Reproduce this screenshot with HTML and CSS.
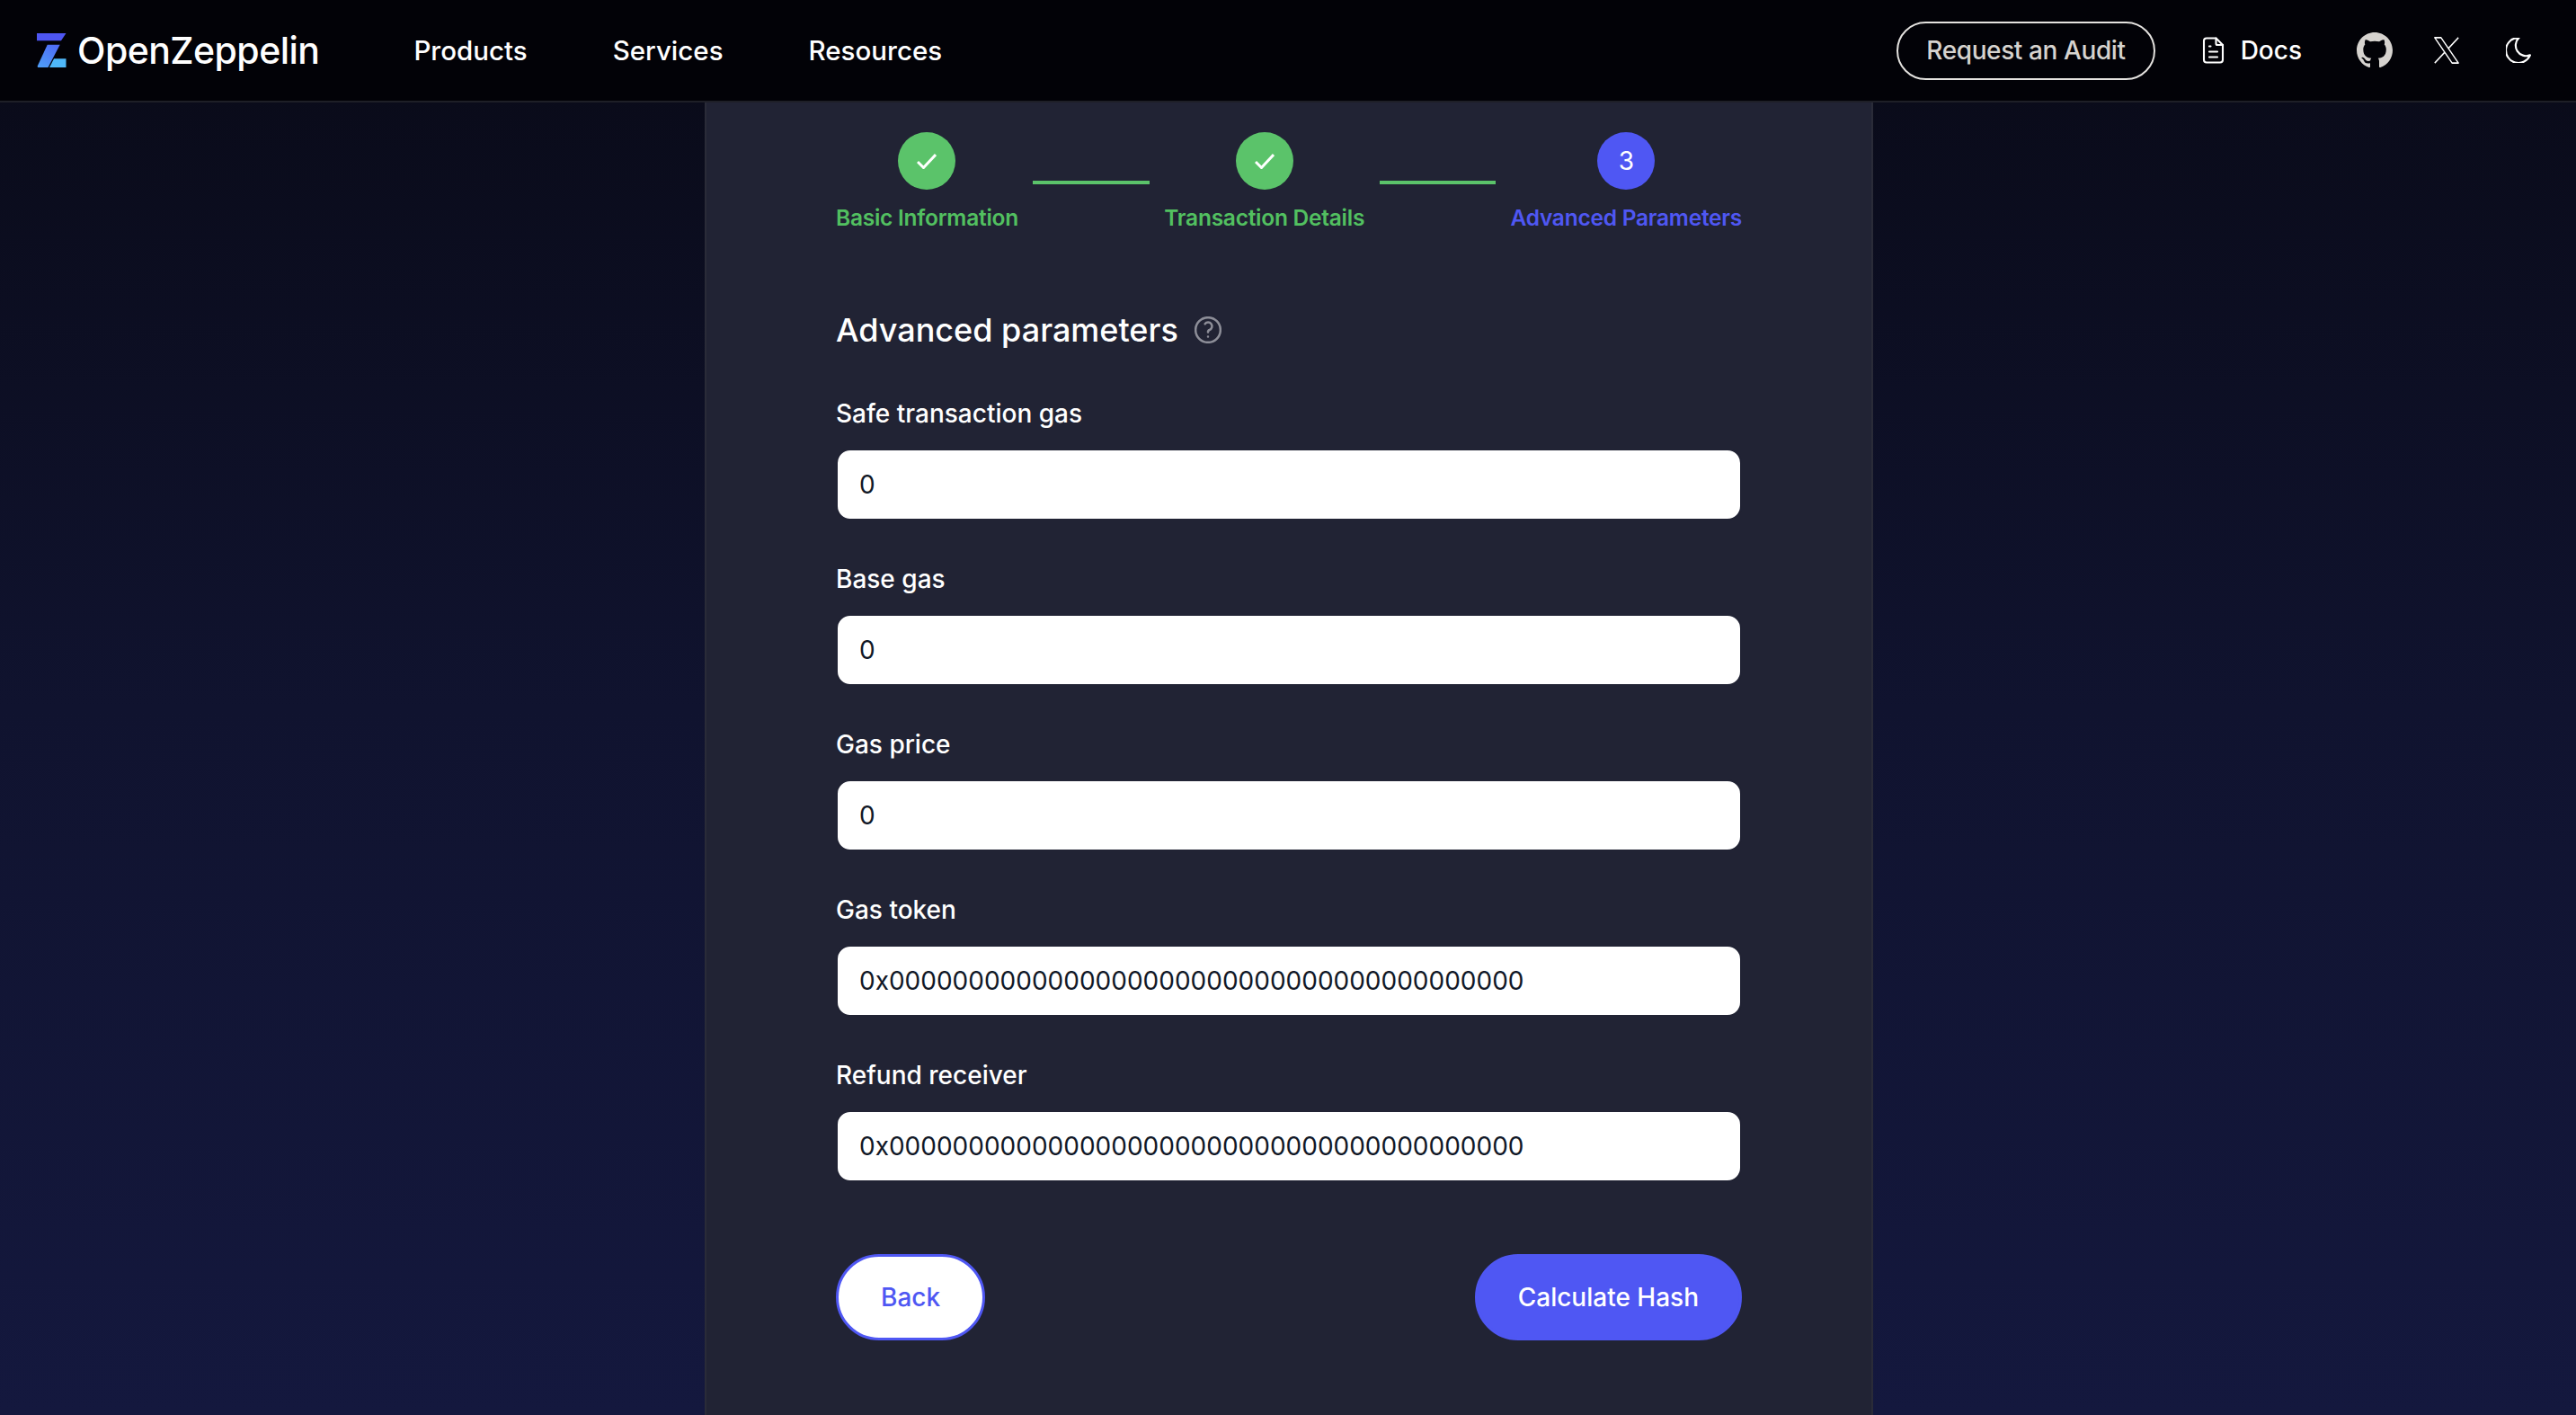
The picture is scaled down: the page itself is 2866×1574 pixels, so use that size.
FILE: index.html
```html
<!DOCTYPE html>
<html>
<head>
	<title>Safe Utils - Advanced parameters</title>
	<meta charset="UTF-8">
	<link rel="stylesheet" href="styles.css">
</head>
<body>
	<header class="topbar">
		<a class="brand" href="#">
			<svg class="brand-mark" viewBox="0 0 33 38" width="33" height="38">
				<defs>
					<linearGradient id="zmid" x1="0.8" y1="0" x2="0.2" y2="1">
						<stop offset="0" stop-color="#4f6cf6"/>
						<stop offset="1" stop-color="#4e9cf8"/>
					</linearGradient>
				</defs>
				<polygon points="0,0 32.5,0 27,8.3 0,8.3" fill="#4e56f2"/>
				<polygon points="11.7,12.7 25.7,12.7 12.5,38 1.2,38 0.6,36.8" fill="url(#zmid)"/>
				<polygon points="19,28.2 32.5,28.2 32.5,38 14,38" fill="#4fb8fa"/>
			</svg>
			<span class="brand-name">OpenZeppelin</span>
		</a>
		<nav class="mainnav">
			<a href="#">Products</a>
			<a href="#">Services</a>
			<a href="#">Resources</a>
		</nav>
		<div class="actions">
			<a class="audit" href="#">Request an Audit</a>
			<a class="docs" href="#">
				<svg viewBox="4 2 16 20" width="25" height="30" fill="none" stroke="#fff" stroke-width="1.4" stroke-linecap="round" stroke-linejoin="round">
					<path d="M14 3v4a1 1 0 0 0 1 1h4"/>
					<path d="M17 21h-10a2 2 0 0 1 -2 -2v-14a2 2 0 0 1 2 -2h7l5 5v11a2 2 0 0 1 -2 2z"/>
					<path d="M9 9h1M9 13h6M9 17h6"/>
				</svg>
				<span>Docs</span>
			</a>
			<a class="icon-github" href="#">
				<svg viewBox="0 0 16 16" width="40" height="40" fill="#d6d3cf">
					<path d="M8 0C3.58 0 0 3.58 0 8c0 3.54 2.29 6.53 5.47 7.59.4.07.55-.17.55-.38 0-.19-.01-.82-.01-1.49-2.01.37-2.53-.49-2.69-.94-.09-.23-.48-.94-.82-1.13-.28-.15-.68-.52-.01-.53.63-.01 1.08.58 1.23.82.72 1.21 1.87.87 2.33.66.07-.52.28-.87.51-1.07-1.78-.2-3.64-.89-3.64-3.95 0-.87.31-1.59.82-2.15-.08-.2-.36-1.02.08-2.12 0 0 .67-.21 2.2.82.64-.18 1.32-.27 2-.27.68 0 1.36.09 2 .27 1.53-1.04 2.2-.82 2.2-.82.44 1.1.16 1.92.08 2.12.51.56.82 1.27.82 2.15 0 3.07-1.87 3.75-3.65 3.95.29.25.54.73.54 1.48 0 1.07-.01 1.93-.01 2.2 0 .21.15.46.55.38A8.013 8.013 0 0016 8c0-4.42-3.58-8-8-8z"/>
				</svg>
			</a>
			<a class="icon-x" href="#">
				<svg viewBox="3.5 3.5 17 17" width="28" height="30" fill="none" stroke="#fff" stroke-width="0.9" stroke-linejoin="round" preserveAspectRatio="none">
					<path d="M4 4l11.733 16h4.267l-11.733 -16z"/>
					<path d="M4 20l6.768 -6.768m2.46 -2.46l6.772 -6.772"/>
				</svg>
			</a>
			<a class="icon-moon" href="#">
				<svg viewBox="3 3 18 18" width="28" height="28" fill="none" stroke="#fff" stroke-width="1.4" stroke-linejoin="round">
					<path d="M12 3c.132 0 .263 0 .393 0a7.5 7.5 0 0 0 7.92 12.446a9 9 0 1 1 -8.313 -12.454z"/>
				</svg>
			</a>
		</div>
	</header>

	<main class="page">
		<section class="panel">
			<div class="stepper">
				<div class="step done">
					<span class="dot">
						<svg viewBox="0 0 22 17" width="22" height="17" fill="none" stroke="#fff" stroke-width="3"><path d="M1 9l6.500 6.500L21 1"/></svg>
					</span>
					<span class="step-label">Basic Information</span>
				</div>
				<div class="step-line"></div>
				<div class="step done">
					<span class="dot">
						<svg viewBox="0 0 22 17" width="22" height="17" fill="none" stroke="#fff" stroke-width="3"><path d="M1 9l6.500 6.500L21 1"/></svg>
					</span>
					<span class="step-label">Transaction Details</span>
				</div>
				<div class="step-line"></div>
				<div class="step current">
					<span class="dot">3</span>
					<span class="step-label">Advanced Parameters</span>
				</div>
			</div>

			<h2 class="section-title">
				Advanced parameters
				<svg viewBox="3 3 18 18" width="30" height="30" fill="none" stroke="#8d8e98" stroke-width="1.500" stroke-linecap="round" stroke-linejoin="round">
					<circle cx="12" cy="12" r="8.300"/>
					<path d="M12 16.500v.01M12 13.500a1.500 1.500 0 0 1 1 -1.500a2.600 2.600 0 1 0 -3 -4"/>
				</svg>
			</h2>

			<form action="javascript:void(0);">
				<label class="field">
					<span>Safe transaction gas</span>
					<input type="text" value="0">
				</label>
				<label class="field">
					<span>Base gas</span>
					<input type="text" value="0">
				</label>
				<label class="field">
					<span>Gas price</span>
					<input type="text" value="0">
				</label>
				<label class="field">
					<span>Gas token</span>
					<input type="text" value="0x0000000000000000000000000000000000000000">
				</label>
				<label class="field">
					<span>Refund receiver</span>
					<input type="text" value="0x0000000000000000000000000000000000000000">
				</label>
				<div class="buttons">
					<button type="button" class="btn btn-back">Back</button>
					<button type="button" class="btn btn-next">Calculate Hash</button>
				</div>
			</form>
		</section>
	</main>
</body>
</html>
```

FILE: styles.css
```css
*{
	box-sizing:border-box;
}
html,body{
	height:100%;
}
body{
	margin:0;
	display:flex;
	flex-direction:column;
	overflow:hidden;
	font-family:"Inter","Liberation Sans",sans-serif;
	color:#fff;
	background:linear-gradient(180deg,#090a17 0%,#10132f 50%,#14183e 100%);
}
a{
	color:inherit;
	text-decoration:none;
}

/* top bar */
.topbar{
	flex:none;
	display:flex;
	align-items:center;
	height:114px;
	padding:0 50px 0 41px;
	background-color:#020207;
	border-bottom:2px solid #1e1f27;
}
.brand{
	display:flex;
	align-items:center;
	gap:12px;
}
.brand-mark{
	display:block;
}
.brand-name{
	font-size:41px;
	font-weight:500;
	letter-spacing:-0.550px;
	line-height:48px;
}
.mainnav{
	display:flex;
	gap:95px;
	margin-left:105px;
	font-size:29.500px;
	font-weight:500;
}
.actions{
	display:flex;
	align-items:center;
	margin-left:auto;
	font-size:28px;
	font-weight:500;
}
.audit{
	display:flex;
	align-items:center;
	height:65px;
	padding:0 31px;
	border:2px solid #e4e2df;
	border-radius:33px;
	color:#d6d3cf;
	letter-spacing:-0.400px;
}
.docs{
	display:flex;
	align-items:center;
	gap:18px;
	margin-left:52px;
}
.docs svg,.actions svg{
	display:block;
}
.icon-github{
	margin-left:61px;
}
.icon-x{
	margin-left:46px;
}
.icon-moon{
	margin-left:52px;
}

/* panel */
.page{
	flex:1;
	display:flex;
	justify-content:center;
	padding-left:2px;
}
.panel{
	width:1300px;
	padding:33px 144px 0;
	background-color:#212334;
	border-left:2px solid #2a2b38;
	border-right:2px solid #2a2b38;
}

/* stepper */
.stepper{
	display:flex;
	gap:16.500px;
}
.step{
	display:flex;
	flex-direction:column;
	align-items:center;
	font-size:24.500px;
	font-weight:600;
	letter-spacing:-0.250px;
	white-space:nowrap;
}
.dot{
	display:flex;
	align-items:center;
	justify-content:center;
	width:64px;
	height:64px;
	border-radius:50%;
	color:#fff;
	font-size:28px;
	font-weight:400;
}
.step-label{
	margin-top:14px;
	line-height:35px;
}
.step.done .dot{
	background-color:#5bc36a;
}
.step.done .step-label{
	color:#52c060;
}
.step.current .dot{
	background-color:#4f57f3;
}
.step.current .step-label{
	color:#4f57f3;
}
.step-line{
	flex:1;
	height:4px;
	margin-top:54px;
	background-color:#5bc36a;
}

.section-title{
	display:flex;
	align-items:center;
	gap:18px;
	height:44px;
	margin:85px 0 50px;
	font-size:36px;
	font-weight:500;
}

/* form */
.field{
	display:block;
	margin-bottom:44px;
}
.field span{
	display:block;
	height:42px;
	margin-bottom:18px;
	font-size:28px;
	font-weight:500;
	line-height:42px;
}
.field input{
	display:block;
	width:100%;
	height:80px;
	padding:0 24px;
	border:2px solid #212334;
	border-radius:16px;
	outline:none;
	background-color:#fff;
	color:#111827;
	font-family:inherit;
	font-size:28px;
}
.buttons{
	display:flex;
	justify-content:space-between;
	margin-top:80px;
}
.btn{
	height:96px;
	border:3px solid #4f57f3;
	border-radius:48px;
	font-family:inherit;
	font-size:28px;
	font-weight:500;
}
.btn-back{
	padding:0 47px;
	background-color:#fff;
	color:#4f57f3;
}
.btn-next{
	padding:0 45px;
	background-color:#4f57f3;
	color:#fff;
}
```
